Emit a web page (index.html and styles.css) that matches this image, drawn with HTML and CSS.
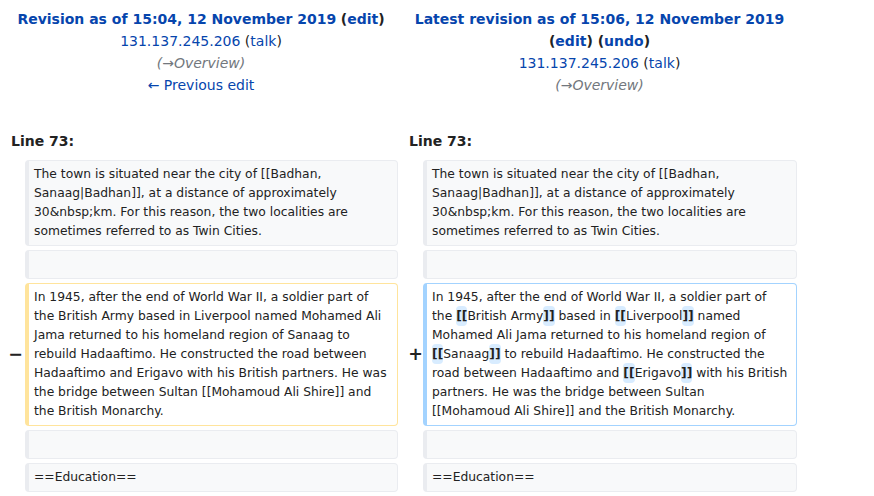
FILE: index.html
```html
<!DOCTYPE html>
<html lang="en">
<head>
<meta charset="utf-8">
<title>Difference between revisions</title>
<link rel="stylesheet" href="styles.css">
</head>
<body>
<div class="diff">
  <div class="title">
    <div class="title-line"><a class="strong" href="#">Revision as of 15:04, 12 November 2019</a> <span class="paren">(<a class="strong" href="#">edit</a>)</span></div>
    <div class="title-line"><a href="#">131.137.245.206</a> <span class="paren-n">(<a href="#">talk</a>)</span></div>
    <div class="title-line comment">(→Overview)</div>
    <div class="title-line"><a href="#">← Previous edit</a></div>
  </div>
  <div class="title">
    <div class="title-line"><a class="strong" href="#">Latest revision as of 15:06, 12 November 2019</a> <span class="paren">(<a class="strong" href="#">edit</a>) (<a class="strong" href="#">undo</a>)</span></div>
    <div class="title-line"><a href="#">131.137.245.206</a> <span class="paren-n">(<a href="#">talk</a>)</span></div>
    <div class="title-line comment">(→Overview)</div>
  </div>

  <div class="lineno">Line 73:</div>
  <div class="lineno">Line 73:</div>

  <div class="marker"></div>
  <div class="cell context">The town is situated near the city of [[Badhan, Sanaag|Badhan]], at a distance of approximately 30&amp;nbsp;km. For this reason, the two localities are sometimes referred to as Twin Cities.</div>
  <div class="marker"></div>
  <div class="cell context">The town is situated near the city of [[Badhan, Sanaag|Badhan]], at a distance of approximately 30&amp;nbsp;km. For this reason, the two localities are sometimes referred to as Twin Cities.</div>

  <div class="marker"></div>
  <div class="cell context"><br></div>
  <div class="marker"></div>
  <div class="cell context"><br></div>

  <div class="marker"><span class="sign minus">−</span></div>
  <div class="cell deleted">In 1945, after the end of World War II, a soldier part of the British Army based in Liverpool named Mohamed Ali Jama returned to his homeland region of Sanaag to rebuild Hadaaftimo. He constructed the road between Hadaaftimo and Erigavo with his British partners. He was the bridge between Sultan [[Mohamoud Ali Shire]] and the British Monarchy.</div>
  <div class="marker"><span class="sign plus">+</span></div>
  <div class="cell added">In 1945, after the end of World War II, a soldier part of the <ins class="change">[[</ins>British Army<ins class="change">]]</ins> based in <ins class="change">[[</ins>Liverpool<ins class="change">]]</ins> named Mohamed Ali Jama returned to his homeland region of <ins class="change">[[</ins>Sanaag<ins class="change">]]</ins> to rebuild Hadaaftimo. He constructed the road between Hadaaftimo and <ins class="change">[[</ins>Erigavo<ins class="change">]]</ins> with his British partners. He was the bridge between Sultan<br>[[Mohamoud Ali Shire]] and the British Monarchy.</div>

  <div class="marker"></div>
  <div class="cell context"><br></div>
  <div class="marker"></div>
  <div class="cell context"><br></div>

  <div class="marker"></div>
  <div class="cell context">==Education==</div>
  <div class="marker"></div>
  <div class="cell context">==Education==</div>
</div>
</body>
</html>
```

FILE: styles.css
```css
html, body {
  margin: 0;
  padding: 0;
  background: #ffffff;
}

body {
  font-family: "DejaVu Sans", sans-serif;
  font-size: 14px;
  color: #222222;
}

a {
  color: #0645ad;
  text-decoration: none;
}

.diff {
  width: 800px;
  box-sizing: border-box;
  padding: 4px;
  display: grid;
  grid-template-columns: 17px 373px 17px 374px;
  column-gap: 4px;
  row-gap: 4px;
}

.title {
  grid-column: span 2;
  text-align: center;
  padding: 4px 7px;
  line-height: 22px;
}

.strong {
  font-weight: bold;
}

.paren {
  font-weight: bold;
  color: #222222;
}

.paren-n {
  color: #222222;
}

.comment {
  font-style: italic;
  color: #72777d;
}

.lineno {
  grid-column: span 2;
  font-weight: bold;
  padding: 26px 7px 4px;
  line-height: 22px;
}

.marker {
  display: flex;
  align-items: center;
  justify-content: flex-end;
  font-weight: bold;
  font-size: 17.5px;
  line-height: 1.2;
  padding-right: 0;
}

.sign.minus {
  margin-right: -2px;
}

.sign.plus {
  margin-right: -4px;
}

.cell {
  font-size: 12.32px;
  line-height: 19px;
  white-space: pre-wrap;
  overflow-wrap: break-word;
  padding: 4px 6px 4px 5px;
  border-style: solid;
  border-width: 1px 1px 1px 4px;
  border-radius: 4px;
  color: #222222;
}

.context {
  background: #f8f9fa;
  border-color: #eaecf0;
}

.deleted {
  background: #ffffff;
  border-color: #ffe49c;
}

.added {
  background: #ffffff;
  border-color: #a3d3ff;
}

.change {
  text-decoration: none;
  font-weight: bold;
  background: #d8ecff;
  border-radius: 4px;
  padding: 3px 0;
}
```
